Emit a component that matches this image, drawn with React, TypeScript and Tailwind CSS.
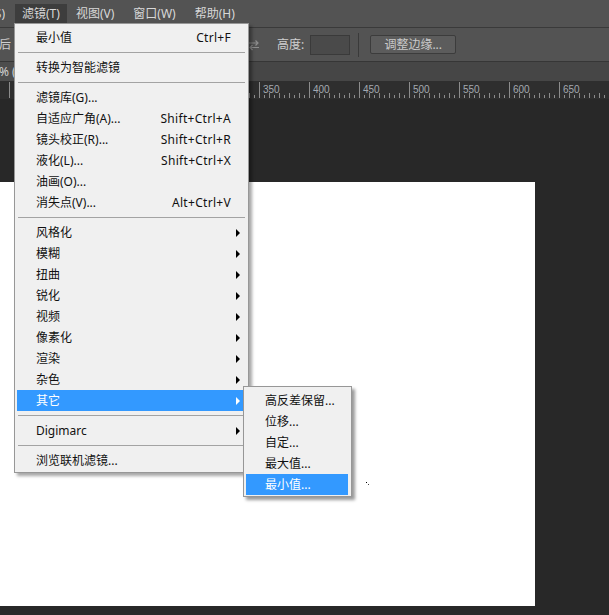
import React from "react";

type Item =
  | { type: "sep" }
  | { type: "item"; label: string; shortcut?: string; sub?: boolean; active?: boolean };

const sep: Item = { type: "sep" };
const it = (label: string, extra: Partial<{ shortcut: string; sub: boolean; active: boolean }> = {}): Item => ({
  type: "item",
  label,
  ...extra,
});

const filterItems: Item[] = [
  it("最小值", { shortcut: "Ctrl+F" }),
  sep,
  it("转换为智能滤镜"),
  sep,
  it("滤镜库(G)..."),
  it("自适应广角(A)...", { shortcut: "Shift+Ctrl+A" }),
  it("镜头校正(R)...", { shortcut: "Shift+Ctrl+R" }),
  it("液化(L)...", { shortcut: "Shift+Ctrl+X" }),
  it("油画(O)..."),
  it("消失点(V)...", { shortcut: "Alt+Ctrl+V" }),
  sep,
  it("风格化", { sub: true }),
  it("模糊", { sub: true }),
  it("扭曲", { sub: true }),
  it("锐化", { sub: true }),
  it("视频", { sub: true }),
  it("像素化", { sub: true }),
  it("渲染", { sub: true }),
  it("杂色", { sub: true }),
  it("其它", { sub: true, active: true }),
  sep,
  it("Digimarc", { sub: true }),
  sep,
  it("浏览联机滤镜..."),
];

const otherItems: Item[] = [
  it("高反差保留..."),
  it("位移..."),
  it("自定..."),
  it("最大值..."),
  it("最小值...", { active: true }),
];

function MenuRow({ item }: { item: Item }) {
  if (item.type === "sep") {
    return (
      <div className="h-[9px] flex items-center pl-[1px]">
        <div className="h-px w-full bg-[#a3a3a3]" />
      </div>
    );
  }
  return (
    <div
      className={`h-[21px] flex items-center justify-between pl-[19px] whitespace-nowrap ${
        item.active ? "bg-[#3399ff] text-white" : "text-[#111]"
      }`}
    >
      <span>{item.label}</span>
      {item.shortcut && <span className="pr-[14px] tracking-[0.3px]">{item.shortcut}</span>}
      {item.sub && (
        <span
          className={`mr-[5px] w-0 h-0 border-y-[4px] border-y-transparent border-l-[4px] ${
            item.active ? "border-l-white" : "border-l-black"
          }`}
        />
      )}
    </div>
  );
}

function Ruler() {
  const ticks = [];
  for (let x = 9; x < 609; x += 5) {
    const step = (x - 9) % 50;
    let h = 3;
    if (step === 0) h = 16;
    else if (step % 10 === 0) h = 5;
    ticks.push(<rect key={x} x={x} y={17 - h} width={1} height={h} fill="#8c8c8c" />);
  }
  // labels left of x=250 sit under the open menu
  const labels = [];
  for (let x = 259, v = 350; x < 609; x += 50, v += 50) {
    labels.push(
      <text key={v} x={x + 4} y={12} fontSize={10} fill="#a4a9b0" fontFamily="'Liberation Sans', sans-serif">
        {v}
      </text>
    );
  }
  return (
    <svg width={609} height={18} className="block bg-[#2e2e2e]">
      {ticks}
      {labels}
    </svg>
  );
}

export default function App() {
  return (
    <div className="relative w-[609px] h-[615px] overflow-hidden bg-[#282828] flex flex-col font-['Noto_Sans','Noto_Sans_CJK_SC',sans-serif] text-[12px] leading-none">
      {/* Menu bar */}
      <div className="h-[28px] shrink-0 bg-[#535353] flex items-start pt-[4px] text-[#d8d8d8] border-b border-[#3a3a3a]">
        <div className="w-[5px] h-[19px] overflow-hidden flex items-center justify-end whitespace-nowrap">
          <span>选择(S)</span>
        </div>
        <div className="ml-[10px] h-[19px] px-[7px] flex items-center bg-[#3d3d3d] whitespace-nowrap">滤镜(T)</div>
        <div className="ml-[2px] h-[19px] px-[7px] flex items-center whitespace-nowrap">视图(V)</div>
        <div className="ml-[5px] h-[19px] px-[7px] flex items-center whitespace-nowrap">窗口(W)</div>
        <div className="ml-[5px] h-[19px] px-[7px] flex items-center whitespace-nowrap">帮助(H)</div>
      </div>

      {/* Options bar */}
      <div className="h-[34px] shrink-0 bg-[#535353] border-b border-[#363636] flex items-center text-[#cfcfcf]">
        <span className="-ml-[1px]">后</span>
        <svg width="12" height="12" viewBox="0 0 12 12" className="ml-[237px]" fill="none" stroke="#8d8d8d" strokeWidth="1.2">
          <path d="M1 4h9M7.5 1.5L10 4 7.5 6.5" />
          <path d="M11 8.5H2M4.5 6L2 8.5 4.5 11" />
        </svg>
        <span className="ml-[17px]">高度:</span>
        <div className="ml-[6px] w-[40px] h-[20px] bg-[#4a4a4a] border border-[#3a3a3a]" />
        <div className="ml-[8px] w-px h-[24px] bg-[#3a3a3a]" />
        <div className="ml-[11px] w-[86px] h-[19px] bg-[#5c5c5c] border border-[#3c3c3c] rounded-[2px] flex items-center justify-center text-[#cacaca]">
          调整边缘...
        </div>
      </div>

      {/* Document tab bar */}
      <div className="h-[19px] shrink-0 bg-[#464646] flex">
        <div className="w-[40px] bg-[#4d4d4d] flex items-center text-[#d2d2d2] whitespace-nowrap">
          <span className="-ml-[1px]">% (</span>
        </div>
      </div>

      {/* Ruler */}
      <div className="shrink-0">
        <Ruler />
      </div>

      {/* Canvas */}
      <div className="flex-1 pt-[83px]">
        <div className="relative w-[535px] h-[424px] bg-white">
          <div className="absolute left-[366px] top-[300px] w-px h-px bg-black" />
          <div className="absolute left-[368px] top-[302px] w-px h-px bg-[#444]" />
        </div>
      </div>

      {/* Filter menu */}
      <div className="absolute left-[14px] top-[23px] w-[235px] bg-[#f0f0f0] border border-[#979797] pt-[3px] pb-[1px] pl-[2px] pr-[3px] shadow-[3px_3px_3px_rgba(0,0,0,0.35)]">
        {filterItems.map((item, i) => (
          <MenuRow key={i} item={item} />
        ))}
      </div>

      {/* "其它" submenu */}
      <div className="absolute left-[243px] top-[386px] w-[109px] bg-[#f0f0f0] border border-[#979797] pt-[3px] pb-[1px] pl-[2px] pr-[3px] shadow-[3px_3px_3px_rgba(0,0,0,0.4)]">
        {otherItems.map((item, i) => (
          <MenuRow key={i} item={item} />
        ))}
      </div>
    </div>
  );
}
